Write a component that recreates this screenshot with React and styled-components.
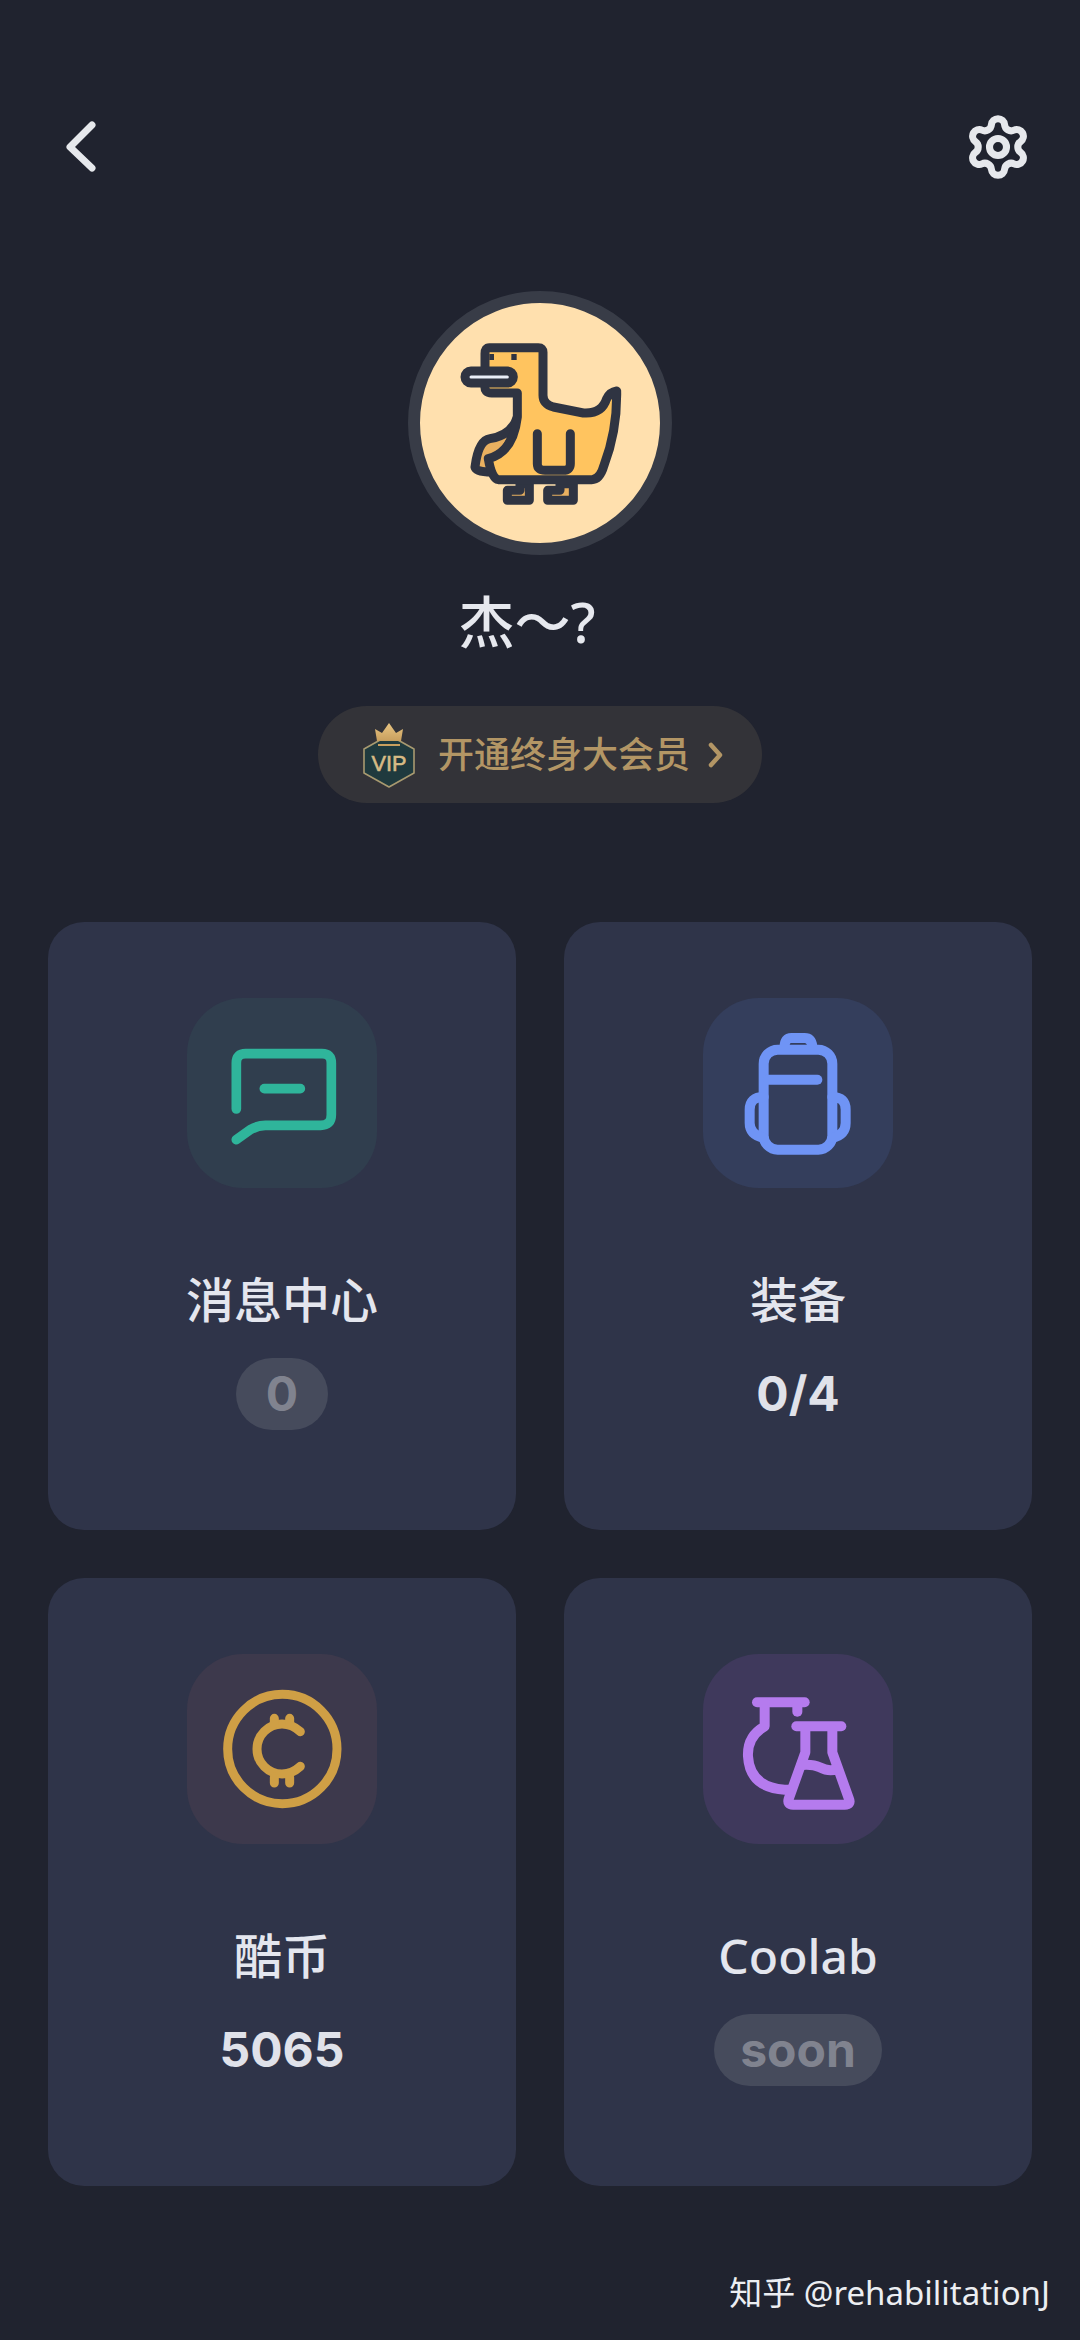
import React from 'react';
import styled, { createGlobalStyle } from 'styled-components';
import { Settings } from 'lucide-react';

const GlobalStyle = createGlobalStyle`
  html, body {
    margin: 0;
    padding: 0;
    background: #20232f;
  }
`;

const FONT = `"Noto Sans", "Noto Sans CJK SC", sans-serif`;

const Page = styled.div`
  box-sizing: border-box;
  width: 1080px;
  height: 2340px;
  overflow: hidden;
  padding: 115px 48px 0;
  background: #20232f;
  color: #e6e8f0;
  font-family: ${FONT};
`;

const TopBar = styled.div`
  display: flex;
  align-items: center;
  justify-content: space-between;
  height: 64px;
  padding: 0 0 0 14px;
`;

const Profile = styled.div`
  display: flex;
  flex-direction: column;
  align-items: center;
  margin-top: 112px;
`;

const Avatar = styled.div`
  box-sizing: border-box;
  width: 264px;
  height: 264px;
  border-radius: 50%;
  border: 12px solid #383c47;
  background: #ffe0ae;
  svg {
    display: block;
  }
`;

const Name = styled.div`
  margin-top: 28px;
  padding-right: 26px;
  height: 76px;
  line-height: 76px;
  font-size: 56px;
  font-weight: 500;
  color: #e6e8ee;
`;

const VipPill = styled.div`
  box-sizing: border-box;
  display: flex;
  align-items: center;
  width: 444px;
  height: 97px;
  margin-top: 47px;
  padding-left: 44px;
  border-radius: 49px;
  background: #333338;
  color: #b39665;
`;

const VipText = styled.span`
  margin-left: 22px;
  font-size: 36px;
  font-weight: 500;
  line-height: 97px;
  white-space: nowrap;
`;

const Grid = styled.div`
  display: grid;
  grid-template-columns: 468px 468px;
  grid-auto-rows: 608px;
  gap: 48px;
  margin-top: 119px;
`;

const Card = styled.div`
  display: flex;
  flex-direction: column;
  align-items: center;
  padding-top: 76px;
  border-radius: 36px;
  background: #2f3449;
`;

const Tile = styled.div`
  width: 190px;
  height: 190px;
  border-radius: 56px;
  background: ${(p) => p.$bg};
  svg {
    display: block;
  }
`;

const Title = styled.div`
  margin-top: 79px;
  height: 66px;
  line-height: 66px;
  font-size: 48px;
  font-weight: 500;
  color: #e4e6ee;
`;

const Value = styled.div`
  box-sizing: border-box;
  margin-top: 25px;
  height: 72px;
  line-height: 72px;
  min-width: 92px;
  text-align: center;
  font-family: Inter, "Noto Sans", sans-serif;
  font-weight: 700;
  font-size: 48px;
  border-radius: 36px;
  padding: ${(p) => (p.$muted ? '0 26px' : '0')};
  background: ${(p) => (p.$muted ? '#464b5c' : 'transparent')};
  color: ${(p) => (p.$muted ? '#80838f' : '#e0e2ea')};
`;

const Watermark = styled.div`
  margin-top: 85px;
  margin-right: -18px;
  text-align: right;
  font-size: 33px;
  line-height: 44px;
  color: #eceef2;
`;

const BackIcon = () => (
  <svg width="36" height="60" viewBox="0 0 36 60" fill="none" stroke="#e6e8ec" strokeWidth="7" strokeLinecap="round" strokeLinejoin="round">
    <path d="M30 8 L8 30 L30 51" />
  </svg>
);

const Duck = () => (
  <svg width="240" height="240" viewBox="120 98 720 720" fill="none" stroke="#2f3442" strokeWidth="27" strokeLinecap="round" strokeLinejoin="round">
    <path fill="#e9b060" d="M448 640 V690 H382 V660 H420 V640 Z" />
    <path fill="#e9b060" d="M580 640 V690 H503 V660 H540 V640 Z" />
    <path fill="#e9b060" d="M412 440 Q395 495 330 505 Q295 510 285 590 Q288 605 335 605 L345 560 Q395 540 412 440 Z" />
    <path fill="#ffc45f" d="M328 232 H475 Q489 232 489 246 V375 Q489 402 520 410 L610 428 Q665 432 680 385 Q690 365 710 362 Q712 480 672 585 Q660 628 635 628 H355 Q335 625 325 565 Q400 545 412 440 V368 H335 Q312 368 315 345 V250 Q315 232 328 232 Z" />
    <path d="M472 490 V580 Q472 600 495 600 H550 Q571 600 571 580 V490" />
    <rect x="255" y="302" width="145" height="36" rx="18" fill="#e9eef8" />
    <path d="M328 260 H342 M394 260 H410" strokeWidth="18" strokeLinecap="butt" />
  </svg>
);

const VipBadge = () => (
  <svg width="54" height="66" viewBox="0 0 54 66" fill="none">
    <defs>
      <linearGradient id="crown" x1="0" y1="0" x2="0" y2="1">
        <stop offset="0" stopColor="#e8c582" />
        <stop offset="1" stopColor="#c89f5e" />
      </linearGradient>
    </defs>
    <path d="M27 13 L52 27 V51 L27 65 L2 51 V27 Z" fill="#1f3a3e" stroke="#a89a70" strokeWidth="1.6" strokeLinejoin="round" />
    <path d="M13 7 L20 11 L27 1 L34 11 L41 7 L39 19 H15 Z" fill="url(#crown)" />
    <path d="M16 23 H38" stroke="#c89f5e" strokeWidth="2" />
    <text x="27" y="49" textAnchor="middle" fontFamily="'Liberation Sans', sans-serif" fontWeight="400" fontSize="22" stroke="#d6bb85" strokeWidth="0.6" fill="#d6bb85" textLength="35" lengthAdjust="spacingAndGlyphs">VIP</text>
  </svg>
);

const VipArrow = () => (
  <svg width="18" height="28" viewBox="0 0 18 28" fill="none" stroke="#b39665" strokeWidth="4.5" strokeLinecap="round" strokeLinejoin="round" style={{ marginLeft: 17 }}>
    <path d="M4 4 L13 14 L4 24" />
  </svg>
);

const ChatIcon = () => (
  <svg width="190" height="190" viewBox="50 55 570 570" fill="none" stroke="#2fb59b" strokeWidth="29" strokeLinecap="round" strokeLinejoin="round">
    <path d="M198 388 V250 Q198 222 226 222 H455 Q483 222 483 250 V405 Q483 437 451 437 H285 Q262 437 240 450 L198 480" />
    <path d="M282 327 H390" />
  </svg>
);

const BagIcon = () => (
  <svg width="190" height="190" viewBox="40 55 570 570" fill="none" stroke="#6f94f5" strokeWidth="30" strokeLinecap="round" strokeLinejoin="round">
    <path d="M285 200 Q285 175 305 175 H345 Q365 175 368 200" />
    <rect x="222" y="210" width="206" height="300" rx="42" />
    <path d="M235 300 H383" />
    <path d="M222 352 Q180 352 180 390 V430 Q180 465 222 475" />
    <path d="M428 352 Q468 352 468 390 V430 Q468 465 428 475" />
  </svg>
);

const CoinIcon = () => (
  <svg width="190" height="190" viewBox="50 45 570 570" fill="none" stroke="#cf9f45" strokeWidth="27" strokeLinecap="round" strokeLinejoin="round">
    <circle cx="336" cy="330" r="164" />
    <path d="M390 278 Q365 255 335 255 A75 75 0 0 0 335 405 Q365 405 390 382" />
    <path d="M312 238 V255 M358 238 V255 M312 415 V432 M358 415 V432" />
  </svg>
);

const FlaskIcon = () => (
  <svg width="190" height="190" viewBox="40 45 570 570" fill="none" stroke="#b57bee" strokeWidth="30" strokeLinecap="round" strokeLinejoin="round">
    <path d="M202 190 H345" />
    <path d="M323 195 V218" />
    <path d="M225 192 V262 Q172 292 175 352 Q180 445 285 452 H298" />
    <path d="M320 262 H455" />
    <path d="M347 270 V340 L297 480 Q292 497 310 497 H465 Q485 497 478 480 L428 340 V270" />
    <path d="M335 378 Q370 375 390 385 Q420 400 440 390" />
  </svg>
);

const items = [
  { title: '消息中心', value: '0', muted: true, bg: '#303e4e', icon: <ChatIcon /> },
  { title: '装备', value: '0/4', bg: '#343e5c', icon: <BagIcon /> },
  { title: '酷币', value: '5065', bg: '#3d394c', icon: <CoinIcon /> },
  { title: 'Coolab', value: 'soon', muted: true, bg: '#3f395c', icon: <FlaskIcon /> },
];

export default function App() {
  return (
    <Page>
      <GlobalStyle />
      <TopBar>
        <BackIcon />
        <Settings size={68} color="#e6e8ec" strokeWidth={2.5} />
      </TopBar>
      <Profile>
        <Avatar>
          <Duck />
        </Avatar>
        <Name>杰～?</Name>
        <VipPill>
          <VipBadge />
          <VipText>开通终身大会员</VipText>
          <VipArrow />
        </VipPill>
      </Profile>
      <Grid>
        {items.map((item) => (
          <Card key={item.title}>
            <Tile $bg={item.bg}>{item.icon}</Tile>
            <Title>{item.title}</Title>
            <Value $muted={item.muted}>{item.value}</Value>
          </Card>
        ))}
      </Grid>
      <Watermark>知乎 @rehabilitationJ</Watermark>
    </Page>
  );
}
